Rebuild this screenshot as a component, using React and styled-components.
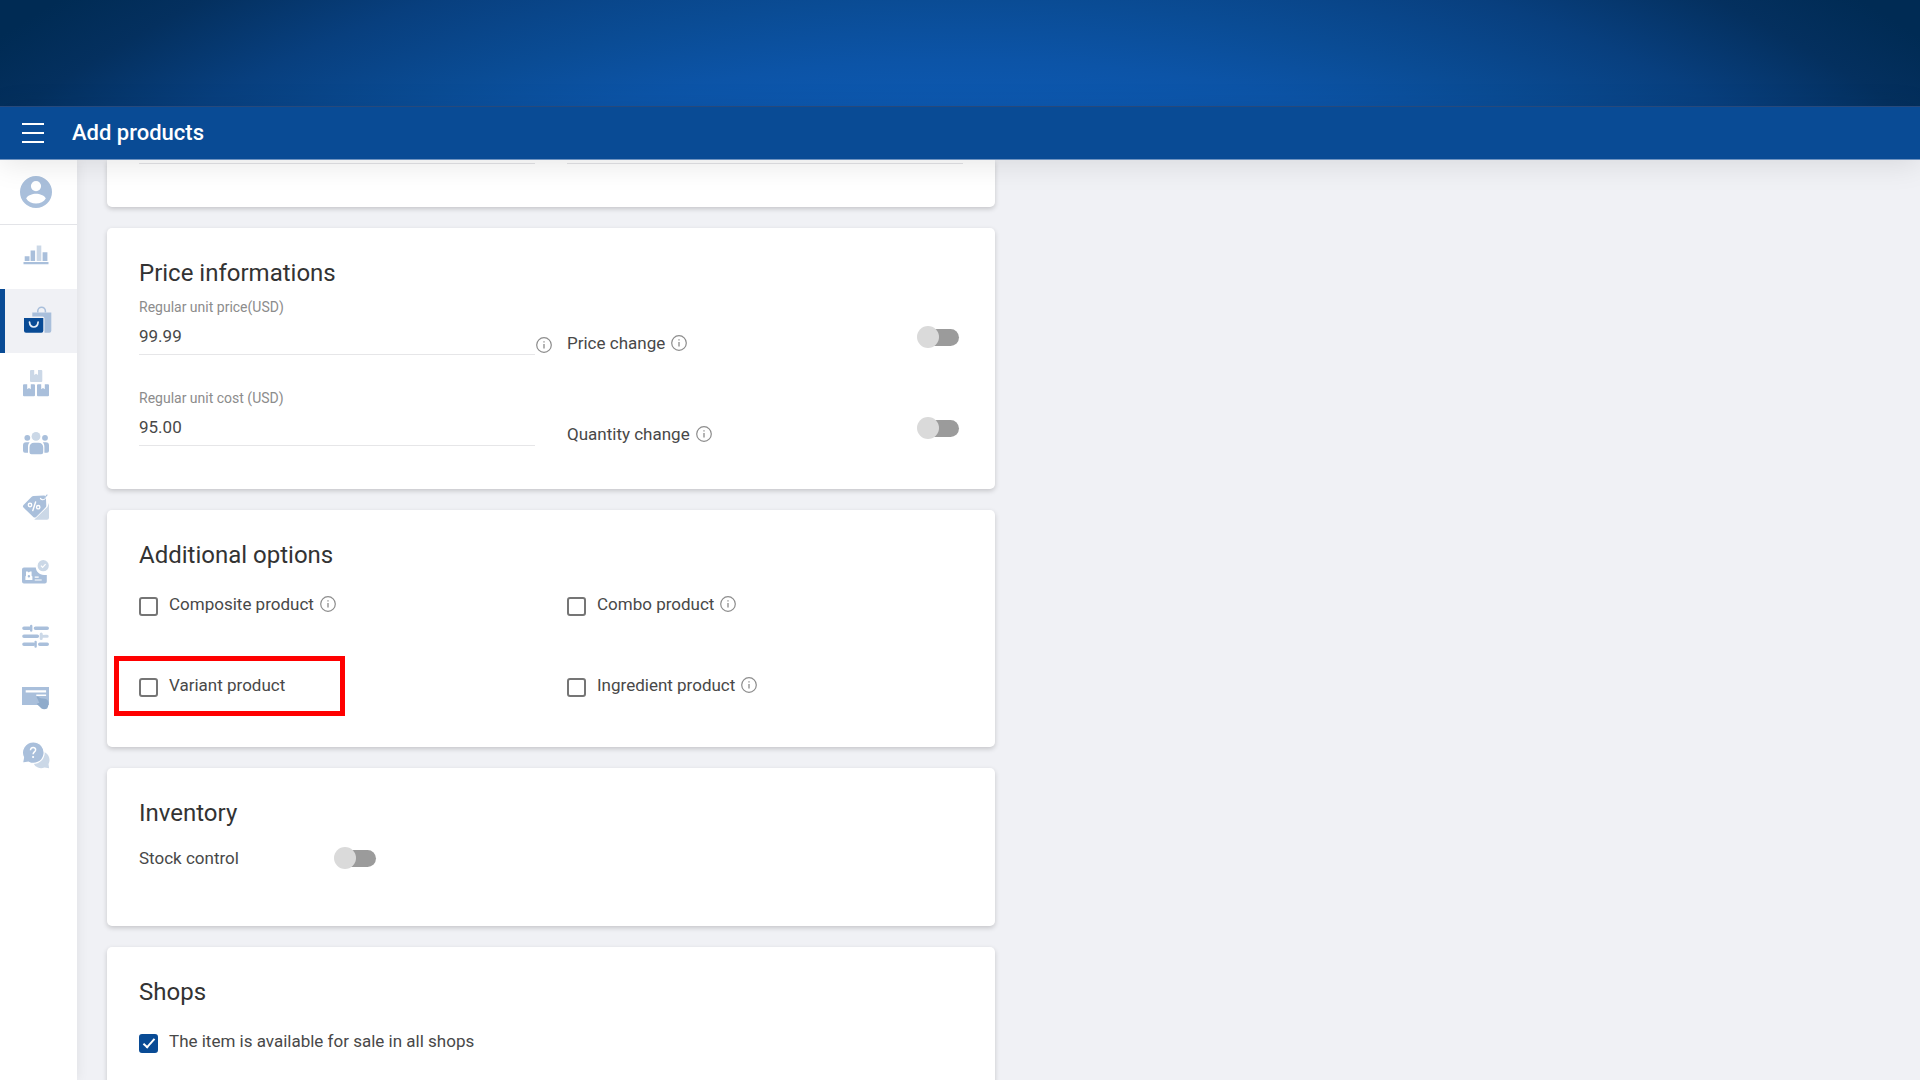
import React, {useState} from "react";
import styled, {createGlobalStyle} from "styled-components";

const BLUE = "#094b95";
const SOFT = "#a9bfdb";
const PALE = "#cbd8e7";

const GlobalStyle = createGlobalStyle`
  *,
  *::before,
  *::after {
    box-sizing: border-box;
  }

  body {
    margin: 0;
    font-family: Roboto, "Liberation Sans", sans-serif;
    color: #484848;
    background: #f0f1f5;
  }
`;

const Page = styled.div`
  display: flex;
  flex-direction: column;
  height: 100vh;
  overflow: hidden;
`;

const Banner = styled.div`
  flex: none;
  height: 106px;
  background: radial-gradient(
    circle at 50% 1500px,
    #0d59b1 1390px,
    #0c54a7 1440px,
    #0a4c95 1500px,
    #083f7e 1590px,
    #04305f 1680px,
    #002b54 1750px
  );
`;

const Header = styled.header`
  position: relative;
  z-index: 2;
  flex: none;
  display: flex;
  align-items: center;
  gap: 28px;
  height: 54px;
  padding: 0 20px;
  background: ${BLUE};
  border-top: 1px solid #27497b;
  border-bottom: 1px solid #6f93c0;
  box-shadow: 0 4px 30px rgba(0, 0, 0, 0.1);
`;

const MenuButton = styled.button`
  display: flex;
  padding: 0;
  border: 0;
  background: none;
  color: #fff;
  cursor: pointer;
`;

const PageTitle = styled.h1`
  margin: 0;
  font-size: 22px;
  line-height: 28px;
  font-weight: 500;
  color: #fff;
`;

const Body = styled.div`
  flex: 1;
  display: flex;
  min-height: 0;
`;

const Sidebar = styled.nav`
  position: relative;
  flex: none;
  width: 77px;
  background: #fff;
  box-shadow: 0 0 12px rgba(0, 0, 0, 0.08);
`;

const NavLink = styled.a`
  display: flex;
  align-items: center;
  height: ${props => props.$height}px;
  padding-left: ${props => (props.$active ? 15 : 20)}px;
  border-left: ${props => (props.$active ? `5px solid ${BLUE}` : "0")};
  border-bottom: ${props => (props.$divided ? "1px solid #e3e4e8" : "0")};
  background: ${props => (props.$active ? "#f0f1f5" : "none")};
`;

const Main = styled.main`
  flex: 1;
  display: grid;
  grid-template-columns: 1fr 1fr;
  column-gap: 12px;
  min-height: 0;
  padding: 0 25px 0 30px;
`;

const Column = styled.div`
  display: flex;
  flex-direction: column;
  gap: 21px;
`;

const Card = styled.section`
  flex: none;
  padding: 29px 32px ${props => props.$bottom}px;
  border-radius: 5px;
  background: #fff;
  box-shadow: 0 2px 5px rgba(0, 0, 0, 0.18);
`;

const ScrolledCard = styled(Card)`
  padding: 3px 32px 43px;
  border-radius: 0 0 5px 5px;
`;

const CardTitle = styled.h2`
  margin: 0 0 ${props => props.$gap}px;
  font-size: 24px;
  line-height: 32px;
  font-weight: 400;
  color: #333;
`;

const Rule = styled.hr`
  width: 100%;
  margin: 0;
  border: 0;
  border-top: 1px solid #e3e3e6;
`;

const Split = styled.div`
  display: grid;
  grid-template-columns: 1fr 32px 1fr;
  row-gap: ${props => props.$rowGap || 0}px;
`;

const Field = styled.label`
  display: flex;
  flex-direction: column;
  font-size: 14px;
  line-height: 16px;
  color: #8c8c8c;
`;

const TextInput = styled.input`
  width: 100%;
  height: 40px;
  padding: 2px 0 0;
  border: 0;
  border-bottom: 1px solid #e6e6e8;
  outline: 0;
  font-family: inherit;
  font-size: 17px;
  color: #484848;
  background: none;
`;

const Hint = styled.div`
  display: flex;
  align-items: flex-end;
  padding: 0 0 2px 1px;
`;

const SwitchRow = styled.label`
  display: flex;
  align-items: flex-end;
  justify-content: space-between;
  padding-right: 4px;
  font-size: 17px;
  line-height: 24px;

  input {
    margin-bottom: 7px;
  }
`;

const StockRow = styled.label`
  display: grid;
  grid-template-columns: 195px auto;
  justify-content: start;
  align-items: center;
  font-size: 17px;
  line-height: 24px;
`;

const Caption = styled.span`
  display: flex;
  align-items: center;
  gap: 6px;
`;

const Switch = styled.input`
  appearance: none;
  display: grid;
  align-items: center;
  width: 42px;
  height: 22px;
  margin: 0;
  cursor: pointer;

  &::before,
  &::after {
    content: "";
    grid-area: 1 / 1;
  }

  &::before {
    height: 17px;
    margin-left: 2px;
    border-radius: 9px;
    background: #9b9b9b;
  }

  &::after {
    width: 22px;
    height: 22px;
    border-radius: 50%;
    background: #dadada;
  }

  &:checked::after {
    justify-self: end;
    background: ${BLUE};
  }
`;

const Option = styled.label`
  position: relative;
  justify-self: start;
  display: flex;
  align-items: flex-end;
  gap: 11px;
  font-size: 17px;
  line-height: 24px;
`;

const CheckBox = styled.input`
  appearance: none;
  display: flex;
  justify-content: center;
  width: 19px;
  height: 19px;
  margin: 0;
  border: 2px solid #757575;
  border-radius: 3px;
  cursor: pointer;

  &:checked {
    border-color: ${BLUE};
    background: ${BLUE};
  }

  &:checked::before {
    content: "";
    width: 6px;
    height: 12px;
    border: solid #fff;
    border-width: 0 2px 2px 0;
    transform: rotate(42deg);
  }
`;

const Highlight = styled.span`
  position: absolute;
  top: -17px;
  left: -25px;
  width: 231px;
  height: 60px;
  border: 5px solid #f00;
  pointer-events: none;
`;

const InfoIcon = () => (
  <svg width="16" height="16" viewBox="0 0 16 16" fill="none" stroke="#8c8c8c">
    <circle cx="8" cy="8" r="7.3" strokeWidth="1.2" />
    <path d="M8 7v4.6M8 4.2v1.4" strokeWidth="1.3" />
  </svg>
);

const NavIcon = ({children}) => (
  <svg width="32" height="32" viewBox="0 0 32 32" fill={SOFT}>
    {children}
  </svg>
);

const NAV = [
  {
    label: "Account",
    height: 65,
    divided: true,
    icon: (
      <path
        fillRule="evenodd"
        d="M16 0a16 16 0 1 0 0 32a16 16 0 0 0 0-32zM16 5a5 5 0 1 1 0 10.200a5 5 0 0 1 0-10.200zM6.200 22.400c1.600-3 6-4.600 9.800-4.600s8.200 1.600 9.800 4.600c-2 3.200-5.600 5.200-9.800 5.200s-7.800-2-9.800-5.200z"
      />
    )
  },
  {
    label: "Dashboard",
    height: 64,
    icon: (
      <>
        <path d="M3.500 21h25v2.200h-25zM4.700 15.200h4.800V20H4.700zM10.600 9.500h4.500V20h-4.500zM22.600 11.300h4.800V20h-4.800z" />
        <path fill={PALE} d="M16.700 4.500h4.600V20h-4.600z" />
      </>
    )
  },
  {
    label: "Products",
    height: 64,
    active: true,
    icon: (
      <>
        <path d="M17.800 7.500V6a3.800 3.800 0 0 1 7.600 0v1.500" fill="none" stroke={SOFT} strokeWidth="1.500" />
        <path d="M12.300 7.400h19v18.300a2 2 0 0 1-2 2h-4.800V13.500a2 2 0 0 0-2-2H12.300z" />
        <path fill={BLUE} d="M4 13h19.300v12.700a2 2 0 0 1-2 2H6a2 2 0 0 1-2-2z" />
        <path d="M9.500 17.200c.3 3.100 2 4.800 4.300 4.800s4-1.700 4.300-4.800" fill="none" stroke="#e6eef7" strokeWidth="1.700" strokeLinecap="round" />
      </>
    )
  },
  {
    label: "Stock",
    height: 60,
    icon: (
      <>
        <path fill={PALE} d="M11 3h3.200v5l1.900-1.200L18 8V3h3.300a1 1 0 0 1 1 1v10a1 1 0 0 1-1 1H11a1 1 0 0 1-1-1V4a1 1 0 0 1 1-1z" />
        <path d="M4 17.300h3.200v5l1.800-1.200 1.800 1.200v-5H14a1 1 0 0 1 1 1v10a1 1 0 0 1-1 1H4a1 1 0 0 1-1-1v-10a1 1 0 0 1 1-1z" />
        <path d="M18 17.300h3.200v5l1.800-1.200 1.800 1.200v-5H28a1 1 0 0 1 1 1v10a1 1 0 0 1-1 1H18a1 1 0 0 1-1-1v-10a1 1 0 0 1 1-1z" />
      </>
    )
  },
  {
    label: "Customers",
    height: 62,
    icon: (
      <>
        <circle fill={PALE} cx="16" cy="8.400" r="4.400" />
        <circle cx="7.300" cy="9.800" r="2.900" />
        <circle cx="25" cy="9.800" r="2.900" />
        <path d="M14 14.700h4.500c2.800 0 4.700 2 4.700 4.700v4.800a2 2 0 0 1-2 2h-9.700a2 2 0 0 1-2-2v-4.800c0-2.700 1.800-4.700 4.500-4.700z" />
        <path d="M6 14.300h3.600c-1 1.300-1.600 2.800-1.600 4.600v5.900H5a2 2 0 0 1-2-2v-5.500a3 3 0 0 1 3-3zM26 14.300h-3.200c1 1.300 1.600 2.800 1.600 4.600v5.900H27a2 2 0 0 0 2-2v-5.500a3 3 0 0 0-3-3z" />
      </>
    )
  },
  {
    label: "Promotions",
    height: 64,
    icon: (
      <>
        <path fill={PALE} d="M29 12v14.700a2 2 0 0 1-2 2H14.200L27.500 16z" />
        <path d="M3.500 13.900 11.700 5.800c.5-.5 1-.8 1.800-.8l10.500-.6c1.200 0 1.800.7 1.900 1.800l.4 8.500c0 .8-.3 1.400-.8 1.900l-9.400 9.400c-.8.8-2 .8-2.800 0L3.500 16.600c-.8-.8-.8-1.900 0-2.700z" />
        <g fill="none" stroke="#fff" strokeWidth="1.400">
          <circle cx="10" cy="14" r="1.700" />
          <circle cx="18.200" cy="16.200" r="1.700" />
          <path d="m15.600 11-2.800 8.600" strokeLinecap="round" />
          <path d="M20.300 7c.8 2 3 2.300 4.400.8 1-1 .6-2.600 2.200-4.300" strokeWidth="1.200" />
        </g>
        <path d="M23 7.600c2 .4 2.600-2.800 4.400-3.800" fill="none" stroke={SOFT} strokeWidth="1.100" />
      </>
    )
  },
  {
    label: "Employees",
    height: 66,
    icon: (
      <>
        <path d="M4 11.400h11.800c.2 3.600 3.400 7.700 8.600 7.500h2.400v6.500a2 2 0 0 1-2 2H4a2 2 0 0 1-2-2v-12a2 2 0 0 1 2-2z" />
        <circle fill={PALE} cx="23.200" cy="9.700" r="5.600" />
        <path d="m20.900 9.600 1.700 1.800 3-3.200" fill="none" stroke="#fff" strokeWidth="1.200" />
        <path
          fill="#fff"
          fillRule="evenodd"
          d="M6 15.600h1.600l1.200 1 1.200-1h1.600v4.200l.8.800V24H5.400v-3.400l.6-.8zM8.900 19.100a1.200 1.200 0 1 0 0 2.400a1.200 1.200 0 0 0 0-2.400z"
        />
        <path d="M14.700 21.200h4M14.700 24h7" stroke="#fff" strokeWidth="1.200" />
      </>
    )
  },
  {
    label: "Settings",
    height: 62,
    icon: (
      <>
        <g fill="none" stroke={SOFT} strokeLinecap="round" strokeWidth="3.600">
          <path d="M4 8.300h5.500M15.500 8.300h11.700M4 16.200h13.300M4 24.300h9.500M19.800 24.300h7.400" />
          <path d="M11.200 6v4.600M15.600 22v4.600" strokeWidth="2.400" />
        </g>
        <path d="M21.200 13.900v4.600M24.500 16.200h2.700M21.200 16.200h2" fill="none" stroke={PALE} strokeLinecap="round" strokeWidth="3" />
      </>
    )
  },
  {
    label: "Subscription",
    height: 60,
    icon: (
      <>
        <path d="M2 6h27v18H2z" />
        <path fill="#fff" d="M5.700 9.200h20.400v2.200H5.700zM16.300 13.600h9.800v1.500h-9.800z" />
        <path
          fill="#8fabcb"
          d="M16.500 15.700c1.200-.8 2.500.1 3.500 1.300l1.800.6c2.500-.2 5.200.4 6.300 2.300.8 2.300.5 4.900-.9 7.500-1.800 1.100-4.200 1-5.700.1-1.400-1.300-2.600-2.700-4.400-3.900-.3-1.400 1-2 2.300-1.500-.7-2.200-1.900-4.300-2.900-6.400z"
        />
      </>
    )
  },
  {
    label: "Help",
    height: 56,
    icon: (
      <>
        <path fill={PALE} d="M21.500 12.500a8.400 8.400 0 0 1 7 12.400l.6 4.400-4.600-.8a8.400 8.400 0 0 1-11.200-4.600z" />
        <path
          stroke="#fff"
          strokeWidth="1.200"
          d="M13.200 3a10.700 10.700 0 1 1-4.700 20.200L2.500 24.200l1-5.900A10.700 10.700 0 0 1 13.200 3z"
        />
        <path
          d="M10.500 11.200c0-3.800 5.400-3.400 5.100-.2-.2 1.900-2.500 2-2.500 4.300"
          fill="none"
          stroke="#fff"
          strokeWidth="1.500"
        />
        <circle fill="#fff" cx="13.100" cy="18" r="1.100" />
      </>
    )
  }
];

const ToggleField = ({label}) => (
  <SwitchRow>
    <Caption>
      {label}
      <InfoIcon />
    </Caption>
    <Switch type="checkbox" role="switch" />
  </SwitchRow>
);

const CheckOption = ({label, info, marked, defaultChecked}) => (
  <Option>
    <CheckBox type="checkbox" defaultChecked={defaultChecked} />
    <Caption>
      {label}
      {info && <InfoIcon />}
    </Caption>
    {marked && <Highlight />}
  </Option>
);

const PriceCard = () => {
  const [price, setPrice] = useState("99.99");
  const [cost, setCost] = useState("95.00");

  return (
    <Card $bottom={43}>
      <CardTitle $gap={10}>Price informations</CardTitle>
      <Split $rowGap={35}>
        <Field>
          Regular unit price(USD)
          <TextInput value={price} onChange={e => setPrice(e.target.value)} />
        </Field>
        <Hint>
          <InfoIcon />
        </Hint>
        <ToggleField label="Price change" />
        <Field>
          Regular unit cost (USD)
          <TextInput value={cost} onChange={e => setCost(e.target.value)} />
        </Field>
        <span />
        <ToggleField label="Quantity change" />
      </Split>
    </Card>
  );
};

const App = () => (
  <>
    <GlobalStyle />
    <Page>
      <Banner />
      <Header>
        <MenuButton type="button" aria-label="Menu">
          <svg width="24" height="22" viewBox="0 0 24 22" stroke="#fff" strokeWidth="2">
            <path d="M2 2h22M2 11h22M2 20h22" />
          </svg>
        </MenuButton>
        <PageTitle>Add products</PageTitle>
      </Header>
      <Body>
        <Sidebar>
          {NAV.map(item => (
            <NavLink
              key={item.label}
              href="#"
              aria-label={item.label}
              $height={item.height}
              $active={item.active}
              $divided={item.divided}
            >
              <NavIcon>{item.icon}</NavIcon>
            </NavLink>
          ))}
        </Sidebar>
        <Main>
          <Column>
            <ScrolledCard>
              <Split>
                <Rule />
                <span />
                <Rule />
              </Split>
            </ScrolledCard>
            <PriceCard />
            <Card $bottom={50}>
              <CardTitle $gap={21}>Additional options</CardTitle>
              <Split $rowGap={57}>
                <CheckOption label="Composite product" info />
                <span />
                <CheckOption label="Combo product" info />
                <CheckOption label="Variant product" marked />
                <span />
                <CheckOption label="Ingredient product" info />
              </Split>
            </Card>
            <Card $bottom={56}>
              <CardTitle $gap={17}>Inventory</CardTitle>
              <StockRow>
                Stock control
                <Switch type="checkbox" role="switch" />
              </StockRow>
            </Card>
            <Card $bottom={50}>
              <CardTitle $gap={21}>Shops</CardTitle>
              <CheckOption label="The item is available for sale in all shops" defaultChecked />
            </Card>
          </Column>
        </Main>
      </Body>
    </Page>
  </>
);

export default App;
